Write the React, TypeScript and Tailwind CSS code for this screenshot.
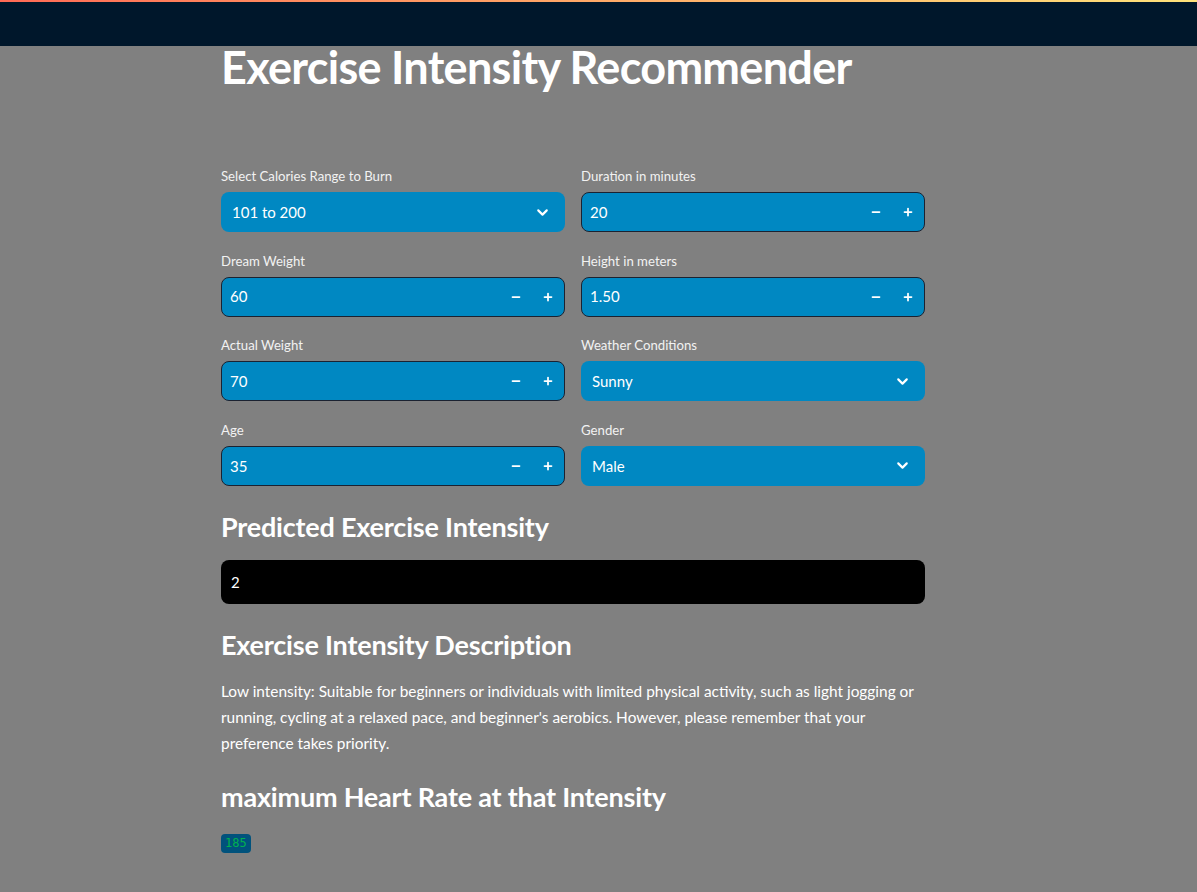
import React from "react";
import { ChevronDown, Minus, Plus } from "lucide-react";

const font = { fontFamily: '"Lato", "Noto Sans", sans-serif' };

function Label({ children }: { children: React.ReactNode }) {
  return <div className="h-[20px] text-[13.2px] leading-[20px] text-[#f2f2f2] mb-[6px]">{children}</div>;
}

function SelectBox({ label, value }: { label: string; value: string }) {
  return (
    <div>
      <Label>{label}</Label>
      <div className="h-[40px] rounded-[8px] bg-[#0088c2] flex items-center justify-between pl-[11px] pr-[14px] text-white text-[15px]">
        <span>{value}</span>
        <ChevronDown size={17} strokeWidth={3} className="text-white" />
      </div>
    </div>
  );
}

function NumberBox({ label, value }: { label: string; value: string }) {
  return (
    <div>
      <Label>{label}</Label>
      <div className="h-[40px] rounded-[8px] bg-[#0088c2] border border-[#1b2231] flex items-center text-white text-[15px]">
        <span className="flex-1 pl-[8px]">{value}</span>
        <div className="w-[32px] h-full flex items-center justify-center">
          <Minus size={12} strokeWidth={3.5} />
        </div>
        <div className="w-[32px] h-full flex items-center justify-center">
          <Plus size={12} strokeWidth={3.5} />
        </div>
      </div>
    </div>
  );
}

export default function App() {
  return (
    <div className="min-h-[892px] bg-[#808080]" style={font}>
      <header className="h-[46px] bg-[#00172b] relative">
        <div className="h-[2px] w-full bg-gradient-to-r from-[#ff6a55] to-[#ffe27a]" />
      </header>
      <main className="w-[704px] ml-[221px]">
        <h1 className="text-[45px] font-bold text-white leading-[44px] -mt-[1px] tracking-[-0.7px]">
          Exercise Intensity Recommender
        </h1>
        <div className="mt-[77px] grid grid-cols-2 gap-x-[16px] gap-y-[18.6px]">
          <SelectBox label="Select Calories Range to Burn" value="101 to 200" />
          <NumberBox label="Duration in minutes" value="20" />
          <NumberBox label="Dream Weight" value="60" />
          <NumberBox label="Height in meters" value="1.50" />
          <NumberBox label="Actual Weight" value="70" />
          <SelectBox label="Weather Conditions" value="Sunny" />
          <NumberBox label="Age" value="35" />
          <SelectBox label="Gender" value="Male" />
        </div>
        <h2 className="mt-[23px] text-[27px] font-bold text-white leading-[36px] tracking-[-0.2px]">
          Predicted Exercise Intensity
        </h2>
        <div className="mt-[15px] h-[44px] rounded-[8px] bg-black text-white text-[15px] flex items-center pl-[10px]">
          2
        </div>
        <h2 className="mt-[23px] text-[27px] font-bold text-white leading-[36px] tracking-[-0.2px]">
          Exercise Intensity Description
        </h2>
        <p className="mt-[15px] text-[15.4px] leading-[26px] text-white">
          Low intensity: Suitable for beginners or individuals with limited physical activity, such as light jogging or
          running, cycling at a relaxed pace, and beginner's aerobics. However, please remember that your preference
          takes priority.
        </p>
        <h2 className="mt-[23px] text-[27px] font-bold text-white leading-[36px] tracking-[-0.2px]">
          maximum Heart Rate at that Intensity
        </h2>
        <div className="mt-[18px] leading-none">
          <span
            className="inline-block rounded-[4px] bg-[#00527c] text-[#00b14f] text-[12px] leading-[19px] px-[4px]"
            style={{ fontFamily: '"DejaVu Sans Mono", monospace' }}
          >
            185
          </span>
        </div>
      </main>
    </div>
  );
}
